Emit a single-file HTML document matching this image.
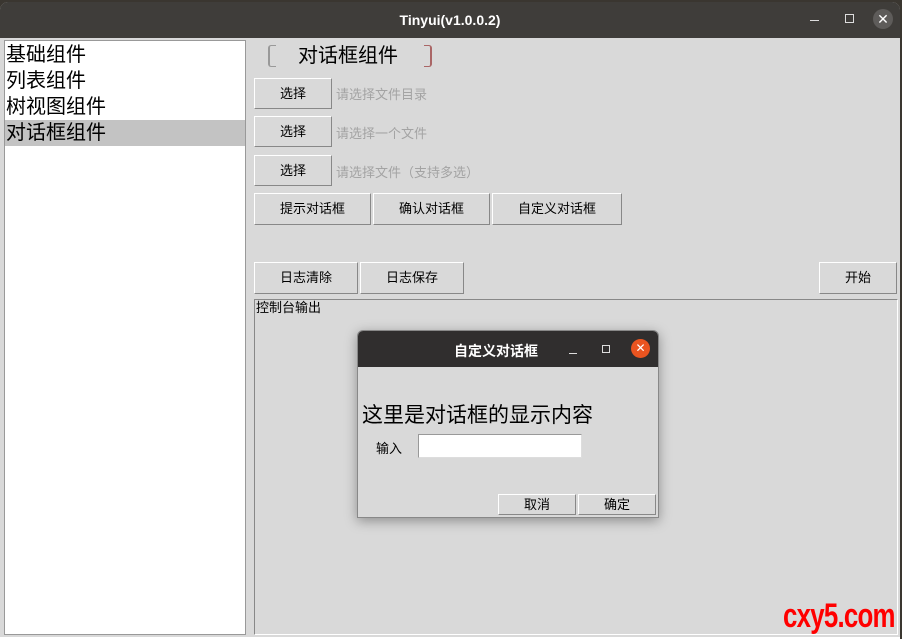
<!DOCTYPE html>
<html><head><meta charset="utf-8"><style>
*{margin:0;padding:0;box-sizing:border-box}
body{width:902px;height:639px;background:#3a3630;font-family:"Liberation Sans","Noto Sans CJK SC",sans-serif;position:relative;overflow:hidden}
.a{position:absolute}
.win{left:0;top:2px;width:900px;height:637px;background:#d9d9d9;border-radius:8px 8px 0 0;overflow:hidden}
.tb{left:0;top:0;width:900px;height:36px;background:#3f3d3a;color:#fff;font-weight:bold;font-size:14px;text-align:center;line-height:36px}
.btn{position:absolute;background:#d9d9d9;border:1px solid;border-color:#fff #888 #888 #fff;font-size:13px;text-align:center;color:#000}
.hint{position:absolute;color:#a3a3a3;font-size:13px}
.li{position:absolute;left:0;width:240px;height:26px;font-size:20px;line-height:26px;color:#000;padding-left:1px}
</style></head><body>
<div class="a win">
<div class="a tb">Tinyui(v1.0.0.2)</div>
<div class="a" style="left:810px;top:18px;width:9px;height:1px;background:#ddd"></div>
<div class="a" style="left:845px;top:12px;width:9px;height:9px;border:1px solid #ddd"></div>
<div class="a" style="left:873px;top:7px;width:20px;height:20px;border-radius:50%;background:#5e5c5a;color:#fff;font-size:14px;line-height:20px;text-align:center">✕</div>
<div class="a" style="left:4px;top:38px;width:242px;height:595px;background:#fff;border:1px solid #999">
<div class="li" style="top:1px">基础组件</div>
<div class="li" style="top:27px">列表组件</div>
<div class="li" style="top:53px">树视图组件</div>
<div class="li" style="top:79px;background:#c3c3c3">对话框组件</div>
</div>
<div class="a" style="left:268px;top:43px;width:8px;height:22px;border:1px solid #999;border-right:none;border-radius:3px 0 0 3px;border-left-width:2px"></div>
<div class="a" style="left:298px;top:40px;font-size:20px;line-height:28px;color:#000">对话框组件</div>
<div class="a" style="left:424px;top:43px;width:8px;height:22px;border:1px solid #a66;border-left:none;border-radius:0 3px 3px 0;border-right-width:2px"></div>
<div class="btn" style="left:254px;top:76px;width:78px;height:31px;line-height:29px">选择</div>
<div class="hint" style="left:336px;top:82px">请选择文件目录</div>
<div class="btn" style="left:254px;top:114px;width:78px;height:31px;line-height:29px">选择</div>
<div class="hint" style="left:336px;top:121px">请选择一个文件</div>
<div class="btn" style="left:254px;top:153px;width:78px;height:31px;line-height:29px">选择</div>
<div class="hint" style="left:336px;top:160px">请选择文件（支持多选）</div>
<div class="btn" style="left:254px;top:191px;width:117px;height:32px;line-height:30px">提示对话框</div>
<div class="btn" style="left:373px;top:191px;width:117px;height:32px;line-height:30px">确认对话框</div>
<div class="btn" style="left:492px;top:191px;width:130px;height:32px;line-height:30px">自定义对话框</div>
<div class="btn" style="left:254px;top:260px;width:104px;height:32px;line-height:30px">日志清除</div>
<div class="btn" style="left:360px;top:260px;width:104px;height:32px;line-height:30px">日志保存</div>
<div class="btn" style="left:819px;top:260px;width:78px;height:32px;line-height:30px">开始</div>
<div class="a" style="left:254px;top:297px;width:644px;height:336px;border:1px solid;border-color:#888 #fff #fff #888;font-size:13px;padding-left:1px;line-height:16px">控制台输出</div>
<div class="a" style="left:0;top:635px;width:900px;height:2px;background:#fff"></div>
<div class="a" style="left:783px;top:594px;color:#f00;font-weight:bold;font-size:34px;line-height:40px;letter-spacing:-1px;transform:scaleX(0.76);transform-origin:left">cxy5.com</div>
</div>
<div class="a" style="left:357px;top:330px;width:302px;height:188px;background:#d9d9d9;border:1px solid #888;border-radius:6px 6px 0 0;overflow:hidden;box-shadow:0 3px 12px rgba(0,0,0,.35)">
<div class="a" style="left:0;top:0;width:302px;height:36px;background:#302e2e"></div>
<div class="a" style="left:96px;top:10px;color:#fff;font-weight:bold;font-size:14px">自定义对话框</div>
<div class="a" style="left:211px;top:22px;width:8px;height:1px;background:#ddd"></div>
<div class="a" style="left:244px;top:14px;width:8px;height:8px;border:1px solid #ddd"></div>
<div class="a" style="left:273px;top:8px;width:19px;height:19px;border-radius:50%;background:#e95420;color:#fff;font-size:12px;line-height:19px;text-align:center">✕</div>
<div class="a" style="left:4px;top:68px;font-size:21px;color:#000">这里是对话框的显示内容</div>
<div class="a" style="left:18px;top:107px;font-size:13px;color:#000">输入</div>
<div class="a" style="left:60px;top:103px;width:164px;height:24px;background:#fff;border:1px solid;border-color:#999 #ddd #ddd #999"></div>
<div class="btn" style="left:140px;top:163px;width:78px;height:21px;line-height:19px">取消</div>
<div class="btn" style="left:220px;top:163px;width:78px;height:21px;line-height:19px">确定</div>
</div>
</body></html>
